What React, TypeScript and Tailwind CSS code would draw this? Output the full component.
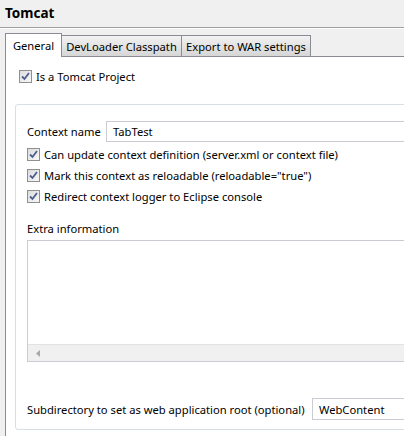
import React from "react";

function Check() {
  return (
    <span className="inline-flex h-[13px] w-[13px] shrink-0 items-center justify-center border border-[#8e8f8f] bg-gradient-to-br from-[#dcdcdc] to-[#f8f8f8]">
      <svg width="9" height="9" viewBox="0 0 9 9">
        <path d="M1 4.5 L3.5 7 L8 1" fill="none" stroke="#4d5e8f" strokeWidth="1.8" />
      </svg>
    </span>
  );
}

function CheckRow({ label, className = "" }: { label: string; className?: string }) {
  return (
    <div className={`flex h-[21px] items-center gap-[4px] ${className}`}>
      <Check />
      <span className="whitespace-nowrap">{label}</span>
    </div>
  );
}

export default function App() {
  return (
    <div
      className="relative h-[436px] w-[404px] overflow-hidden bg-[#f0f0f0] text-[11.2px] leading-[15px] text-black"
      style={{ fontFamily: '"Noto Sans", "Open Sans", sans-serif' }}
    >
      <div className="flex h-[28px] items-center border-b border-[#a0a0a0] px-[5px] text-[13.5px] font-bold">
        Tomcat
      </div>
      <div className="flex h-[28px] items-end border-t border-white pl-[5px]">
        <div className="-mb-px flex h-[24px] w-[57px] items-start justify-center border border-b-0 border-[#898c95] bg-white pt-[4px]">
          General
        </div>
        <div className="flex h-[21px] w-[120px] items-center justify-center border border-l-0 border-b-0 border-[#898c95] bg-gradient-to-b from-[#f2f2f2] to-[#d6d6d6]">
          DevLoader Classpath
        </div>
        <div className="flex h-[21px] w-[129px] items-center justify-center border border-l-0 border-b-0 border-[#898c95] bg-gradient-to-b from-[#f2f2f2] to-[#d6d6d6]">
          Export to WAR settings
        </div>
      </div>
      <div className="ml-[5px] h-[400px] w-[420px] border-l border-t border-[#898c95] bg-white pl-[13px] pt-[9px]">
        <CheckRow label="Is a Tomcat Project" className="h-[19px]" />
        <div className="mt-[17px] flex h-[326px] w-[420px] -ml-[4px] flex-col rounded-[3px] border border-[#d5dfe5] pl-[11px] pt-[16px]">
          <div className="flex h-[21px] items-center">
            <span className="w-[79px] whitespace-nowrap">Context name</span>
            <div className="flex h-[21px] flex-1 items-center border border-[#c9ccd2] pl-[6px]">TabTest</div>
          </div>
          <div className="mt-[2px]">
            <CheckRow label="Can update context definition (server.xml or context file)" />
            <CheckRow label='Mark this context as reloadable (reloadable="true")' />
            <CheckRow label="Redirect context logger to Eclipse console" />
          </div>
          <div className="mt-[14px] h-[15px] whitespace-nowrap">Extra information</div>
          <div className="mt-[4px] flex h-[122px] flex-col border border-[#c9ccd2]">
            <div className="flex-1" />
            <div className="flex h-[17px] items-center border-t border-[#e2e2e2] bg-[#f0f0f0] pl-[8px]">
              <svg width="4" height="7" viewBox="0 0 4 7">
                <path d="M4 0 L0 3.5 L4 7 Z" fill="#a8a8a8" />
              </svg>
            </div>
          </div>
          <div className="mt-[36px] flex h-[22px] items-center">
            <span className="w-[285px] whitespace-nowrap">Subdirectory to set as web application root (optional)</span>
            <div className="flex h-[22px] flex-1 items-center border border-[#c9ccd2] pl-[6px]">WebContent</div>
          </div>
        </div>
      </div>
    </div>
  );
}
